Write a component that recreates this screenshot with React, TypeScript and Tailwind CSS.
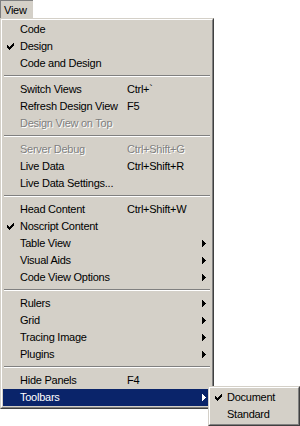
import React from 'react';

type Item =
    | { kind: 'sep' }
    | {
          kind: 'item';
          label: string;
          shortcut?: string;
          checked?: boolean;
          disabled?: boolean;
          submenu?: boolean;
          active?: boolean;
      };

const items: Item[] = [
    { kind: 'item', label: 'Code' },
    { kind: 'item', label: 'Design', checked: true },
    { kind: 'item', label: 'Code and Design' },
    { kind: 'sep' },
    { kind: 'item', label: 'Switch Views', shortcut: 'Ctrl+`' },
    { kind: 'item', label: 'Refresh Design View', shortcut: 'F5' },
    { kind: 'item', label: 'Design View on Top', disabled: true },
    { kind: 'sep' },
    { kind: 'item', label: 'Server Debug', shortcut: 'Ctrl+Shift+G', disabled: true },
    { kind: 'item', label: 'Live Data', shortcut: 'Ctrl+Shift+R' },
    { kind: 'item', label: 'Live Data Settings...' },
    { kind: 'sep' },
    { kind: 'item', label: 'Head Content', shortcut: 'Ctrl+Shift+W' },
    { kind: 'item', label: 'Noscript Content', checked: true },
    { kind: 'item', label: 'Table View', submenu: true },
    { kind: 'item', label: 'Visual Aids', submenu: true },
    { kind: 'item', label: 'Code View Options', submenu: true },
    { kind: 'sep' },
    { kind: 'item', label: 'Rulers', submenu: true },
    { kind: 'item', label: 'Grid', submenu: true },
    { kind: 'item', label: 'Tracing Image', submenu: true },
    { kind: 'item', label: 'Plugins', submenu: true },
    { kind: 'sep' },
    { kind: 'item', label: 'Hide Panels', shortcut: 'F4' },
    { kind: 'item', label: 'Toolbars', submenu: true, active: true },
];

// classic 7x7 pixel check mark
const CheckMark = ({ color = '#000' }: { color?: string }) => (
    <svg width="7" height="7" viewBox="0 0 7 7" shapeRendering="crispEdges">
        <rect x="0" y="2" width="1" height="3" fill={color} />
        <rect x="1" y="3" width="1" height="3" fill={color} />
        <rect x="2" y="4" width="1" height="3" fill={color} />
        <rect x="3" y="3" width="1" height="3" fill={color} />
        <rect x="4" y="2" width="1" height="3" fill={color} />
        <rect x="5" y="1" width="1" height="3" fill={color} />
        <rect x="6" y="0" width="1" height="3" fill={color} />
    </svg>
);

const Arrow = ({ color = '#000' }: { color?: string }) => (
    <svg width="4" height="7" viewBox="0 0 4 7" shapeRendering="crispEdges">
        <rect x="0" y="0" width="1" height="7" fill={color} />
        <rect x="1" y="1" width="1" height="5" fill={color} />
        <rect x="2" y="2" width="1" height="3" fill={color} />
        <rect x="3" y="3" width="1" height="1" fill={color} />
    </svg>
);

const Separator = () => (
    <div className="h-[9px] pt-[3px] px-px">
        <div className="border-t border-b border-t-[#808080] border-b-white" />
    </div>
);

const frame =
    'bg-[#d4d0c8] border border-t-[#d4d0c8] border-l-[#d4d0c8] border-r-[#404040] border-b-[#404040]';
const innerFrame = 'border border-t-white border-l-white border-r-[#808080] border-b-[#808080] p-px';

const MenuRow = ({ item }: { item: Extract<Item, { kind: 'item' }> }) => {
    const text = item.active ? 'text-white' : 'text-black';
    const dim = item.disabled ? 'text-[#808080] [text-shadow:1px_1px_0_#fff]' : text;
    return (
        <div className={`relative flex items-center h-[17px] pl-[17px] pr-[5px] ${item.active ? 'bg-[#0a246a]' : ''}`}>
            {item.checked && (
                <span className="absolute left-[4px] top-[5px] flex">
                    <CheckMark color={item.active ? '#fff' : '#000'} />
                </span>
            )}
            <span className={`w-[107px] whitespace-nowrap ${dim}`}>{item.label}</span>
            <span className={`flex-1 whitespace-nowrap ${dim}`}>{item.shortcut}</span>
            {item.submenu && (
                <span className="flex">
                    <Arrow color={item.active ? '#fff' : '#000'} />
                </span>
            )}
        </div>
    );
};

export default function App() {
    return (
        <div className="relative w-[300px] h-[426px] bg-white overflow-hidden text-[11px] leading-none tracking-[-0.25px] [font-family:Tahoma,'Liberation_Sans',Arial,sans-serif]">
            <div className="h-[18px] w-[33px] bg-[#d4d0c8] border-t border-l border-t-[#808080] border-l-[#808080] pl-[3px] pt-[1px] flex items-center">
                View
            </div>
            <div className={`w-[214px] ${frame}`}>
                <div className={innerFrame}>
                    {items.map((it, i) =>
                        it.kind === 'sep' ? <Separator key={i} /> : <MenuRow key={i} item={it} />,
                    )}
                </div>
            </div>

            {/* Toolbars submenu */}
            <div className={`absolute left-[208px] top-[386px] w-[92px] ${frame}`}>
                <div className={innerFrame}>
                    <div className="relative flex items-center h-[17px] pl-[16px]">
                        <span className="absolute left-[4px] top-[5px] flex">
                            <CheckMark />
                        </span>
                        Document
                    </div>
                    <div className="flex items-center h-[17px] pl-[16px]">Standard</div>
                </div>
            </div>
        </div>
    );
}
